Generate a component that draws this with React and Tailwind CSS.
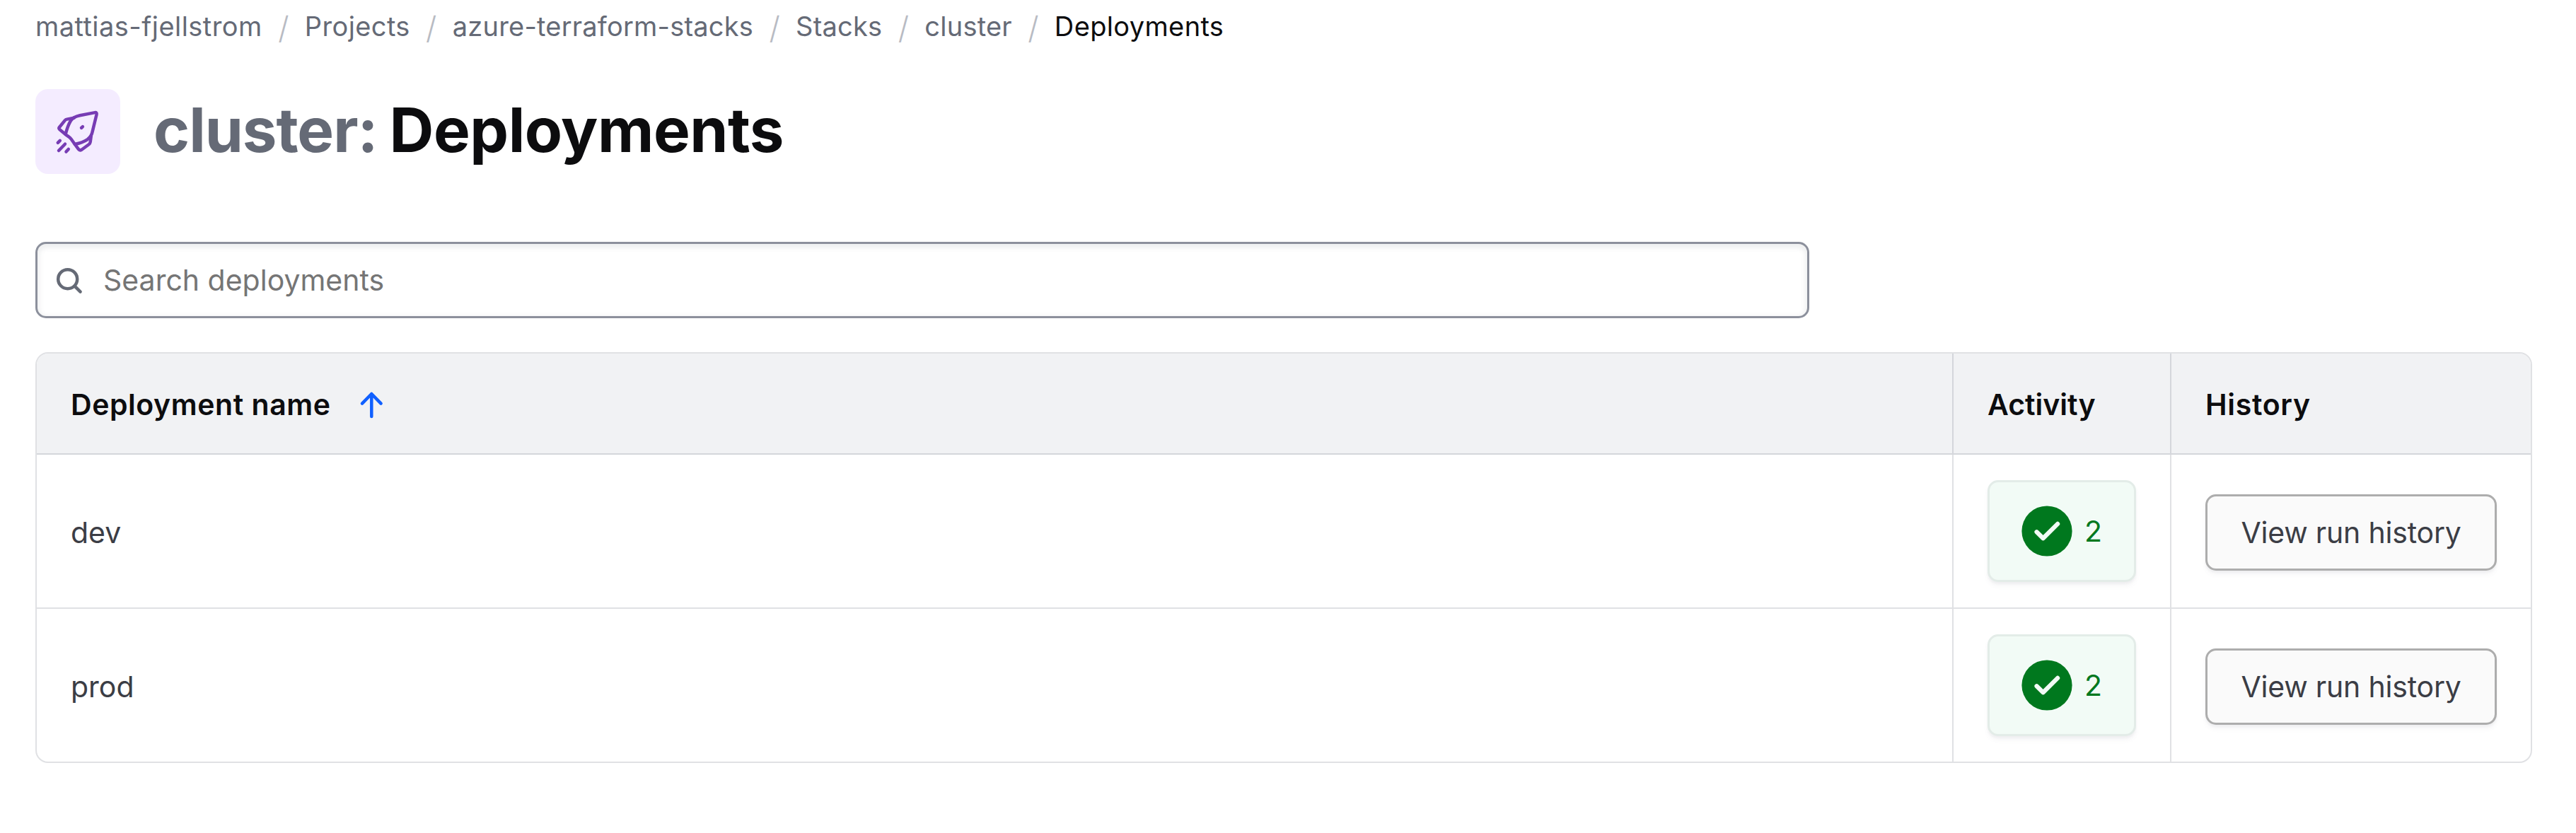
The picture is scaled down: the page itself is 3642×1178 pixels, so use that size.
const crumbs = [
  { label: "mattias-fjellstrom", className: "tracking-[0.45px]" },
  { label: "Projects", className: "tracking-[0.38px]" },
  { label: "azure-terraform-stacks", className: "tracking-[0.2px]" },
  { label: "Stacks", className: "tracking-[0.22px]" },
  { label: "cluster", className: "tracking-[0.22px]" },
];

const deployments = [
  { name: "dev", activity: 2 },
  { name: "prod", activity: 2 },
];

function RocketIcon() {
  return (
    <svg
      className="size-[72px]"
      viewBox="0 0 24 24"
      fill="none"
      stroke="currentColor"
      strokeWidth="1.5"
      strokeLinecap="round"
      strokeLinejoin="round">
      <path d="M20.1 3.05L13 4.4C10.6 4.9 9.5 5.5 8.6 7C7.6 8.7 6.9 10.6 6.2 13.3C7.3 14.3 8.1 14.5 8.9 15.6L10.6 18C13.2 17.5 15 16.8 16.6 15.7C18 14.6 18.7 13.4 18.95 11.8L20.85 4C21 3.3 20.7 2.95 20.1 3.05Z" />
      <path d="M10.2 5.6L6.9 6.2Q6.3 6.3 5.9 6.8L3.3 10Q2.9 10.5 3.4 11L6.2 13.3" />
      <path d="M10.6 18L12.3 20.3Q12.9 21.1 13.8 20.6L17.2 18.1Q17.8 17.6 17.9 16.9L18.3 13.9" />
      <path d="M13.7 10.3L14.3 9.7" />
      <path d="M2.6 17.3L3.6 16.3M3 21L6 17.9M6.5 21.5L7.6 20.3" />
    </svg>
  );
}

function SearchIcon() {
  return (
    <svg
      className="size-[42px] text-[#656a76]"
      viewBox="0 0 42 42"
      fill="none"
      stroke="currentColor"
      strokeWidth="4.5"
      strokeLinecap="round">
      <circle cx="19.7" cy="19.7" r="13.5" />
      <path d="M29.6 29.6L37.6 37.6" />
    </svg>
  );
}

function ArrowUpIcon() {
  return (
    <svg
      className="size-[42px] text-[#1060ff]"
      viewBox="0 0 42 42"
      fill="none"
      stroke="currentColor"
      strokeWidth="4.5"
      strokeLinecap="round"
      strokeLinejoin="round">
      <path d="M21.3 37V5M8 18.6L21.3 5L34.6 18.6" />
    </svg>
  );
}

function CheckCircleIcon() {
  return (
    <svg className="size-[72px]" viewBox="0 0 72 72" fill="none">
      <circle cx="36" cy="36" r="35.6" fill="#00781e" />
      <path
        d="M21.5 37.2L30.6 46.2L51.1 25.9"
        stroke="#f2fbf6"
        strokeWidth="6.2"
        strokeLinecap="round"
        strokeLinejoin="round"
      />
    </svg>
  );
}

function Breadcrumb() {
  return (
    <nav className="flex items-center h-[74px] text-[38px] text-[#656a76]">
      {crumbs.map((crumb) => (
        <div key={crumb.label} className="flex items-center">
          <a className={crumb.className}>{crumb.label}</a>
          <span className="w-[60px] pt-1 text-center text-[44px] leading-[46px] font-light text-[#b8bbc3]">
            /
          </span>
        </div>
      ))}
      <span className="text-[#0c0c0e] tracking-[0.36px]">Deployments</span>
    </nav>
  );
}

function PageHeader() {
  return (
    <header className="mt-[52px] flex items-center gap-[47px]">
      <div className="flex size-[120px] items-center justify-center rounded-[18px] bg-[#f4ecff] text-[#773cb4]">
        <RocketIcon />
      </div>
      <h1 className="flex gap-[17px] pb-1 text-[87px] leading-[116px] font-bold text-[#0c0c0e]">
        <span className="text-[#656a76] tracking-[-1.06px]">cluster:</span>
        <span className="tracking-[-0.45px]">Deployments</span>
      </h1>
    </header>
  );
}

function SearchField() {
  return (
    <div
      className="
        mt-24
        flex
        h-[108px]
        w-[2508px]
        items-center
        gap-7
        rounded-[15px]
        border-3
        border-[#8c909c]
        bg-white
        pl-[23px]
        shadow-[inset_0_3px_6px_3px_#656a761a]
      ">
      <SearchIcon />
      <input
        type="text"
        placeholder="Search deployments"
        className="flex-1 pt-0.5 text-[41px] outline-none placeholder:text-[#757575]"
      />
    </div>
  );
}

function ActivityBadge({ count }) {
  return (
    <div
      className="
        flex
        h-36
        w-[210px]
        items-center
        gap-[17px]
        rounded-[15px]
        border-3
        border-[#e3ece8]
        bg-[#f2fbf6]
        pl-[45px]
        text-[#00781e]
        shadow-[0_3px_3px_#656a760d,0_6px_6px_#656a760d]
      ">
      <CheckCircleIcon />
      <span className="pt-px">{count}</span>
    </div>
  );
}

function DeploymentsTable() {
  return (
    <div className="mt-12 w-[3530px] overflow-hidden rounded-[18px] border-2 border-[#656a7633]">
      <table className="w-full table-fixed border-separate border-spacing-0 text-left text-[41px] text-[#3b3d45]">
        <thead className="bg-[#f1f2f4] text-[#0c0c0e]">
          <tr className="h-[143px]">
            <th className="border-r-2 border-b-2 border-[#656a7633] px-12 py-0 font-semibold">
              <div className="flex items-center pt-1">
                <span className="w-[404px] tracking-[0.55px]">
                  Deployment name
                </span>
                <ArrowUpIcon />
              </div>
            </th>
            <th className="w-[308px] border-r-2 border-b-2 border-[#656a7633] px-12 pt-1 pb-0 font-semibold">
              Activity
            </th>
            <th className="w-[508px] border-b-2 border-[#656a7633] px-12 pt-1 pb-0 font-semibold tracking-[0.7px]">
              History
            </th>
          </tr>
        </thead>
        <tbody>
          {deployments.map((item, index) => {
            const line =
              index < deployments.length - 1
                ? "border-b-2 border-[#656a7633]"
                : "border-[#656a7633]";
            return (
              <tr
                key={item.name}
                className={
                  index < deployments.length - 1 ? "h-[218px]" : "h-[216px]"
                }>
                <td className={`border-r-2 px-12 pt-1.5 pb-0 ${line}`}>
                  {item.name}
                </td>
                <td className={`border-r-2 px-12 py-0 ${line}`}>
                  <ActivityBadge count={item.activity} />
                </td>
                <td className={`px-12 pt-1 pb-0 ${line}`}>
                  <button
                    className="
                      block
                      h-[108px]
                      w-[412px]
                      rounded-[15px]
                      border-3
                      border-[#adadad]
                      bg-[#fafafa]
                      pt-0.5
                      tracking-[-0.2px]
                      shadow-[0_3px_3px_#656a760d,0_6px_6px_#656a760d]
                    ">
                    View run history
                  </button>
                </td>
              </tr>
            );
          })}
        </tbody>
      </table>
    </div>
  );
}

export default function App() {
  return (
    <main className="min-h-[1178px] bg-white px-[50px] font-[Inter,sans-serif]">
      <Breadcrumb />
      <PageHeader />
      <SearchField />
      <DeploymentsTable />
    </main>
  );
}
